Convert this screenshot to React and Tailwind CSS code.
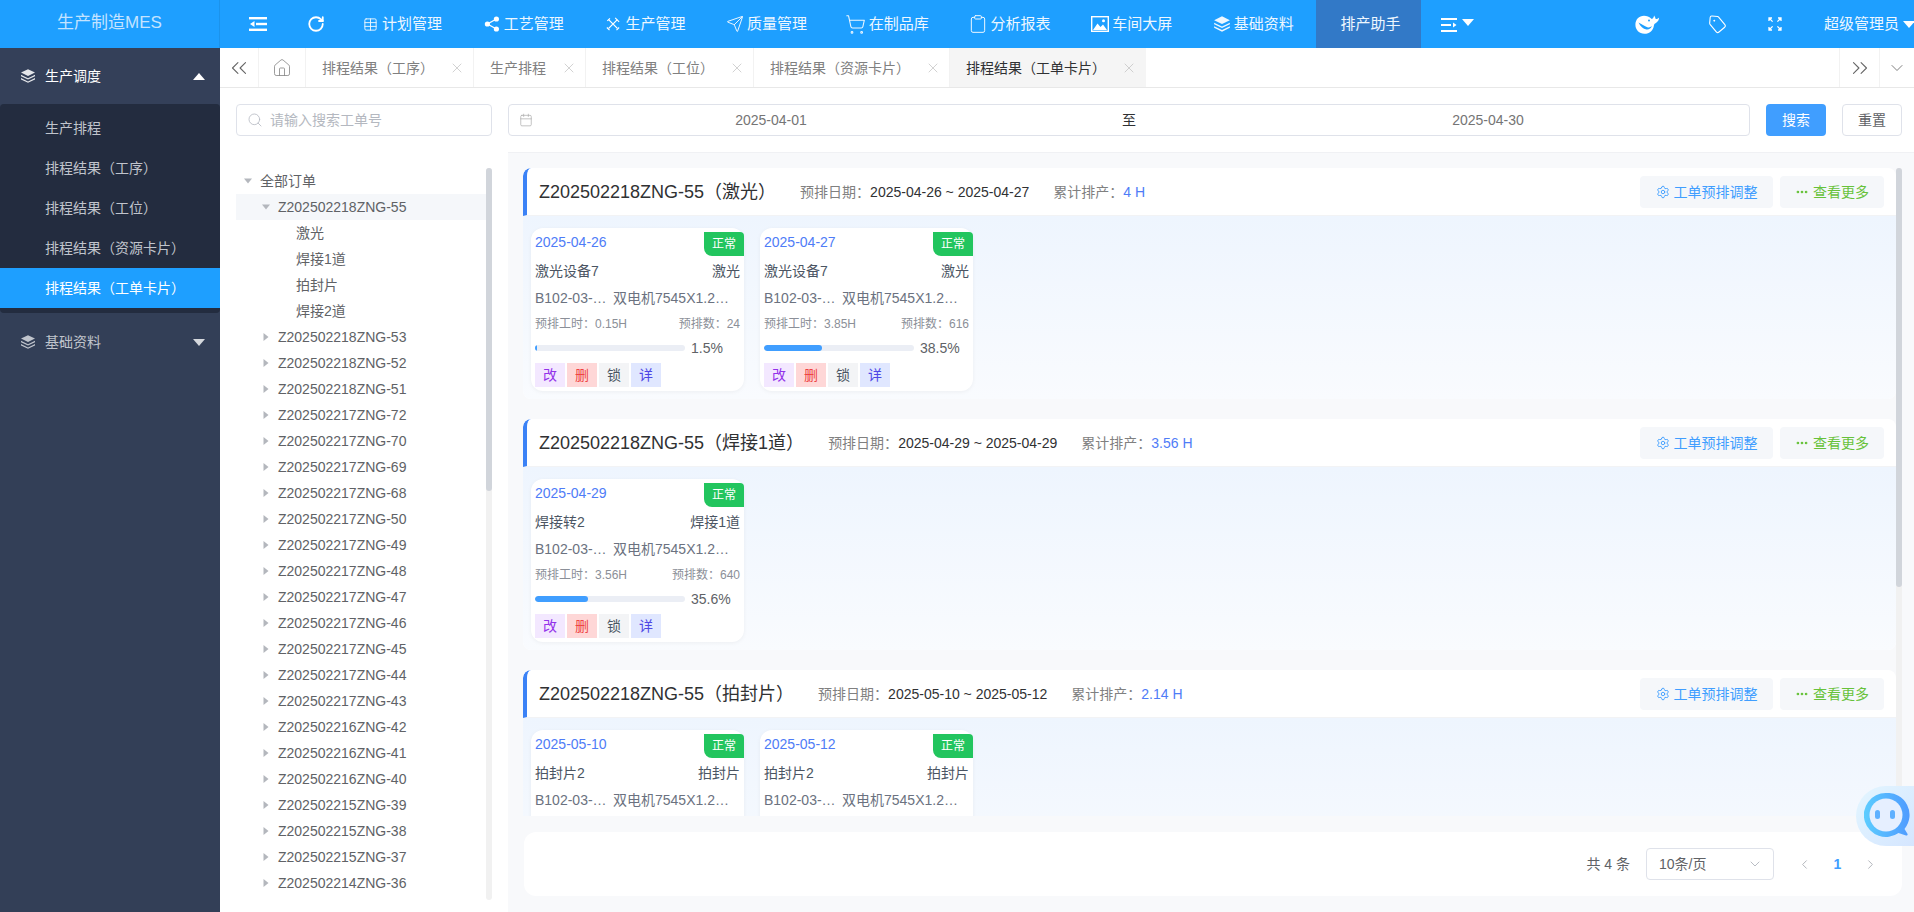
import React from 'react';
import {
    ChevronDown, ChevronLeft, ChevronRight, ChevronsLeft, ChevronsRight, Calendar, Clipboard, Ellipsis,
    House, RotateCw, Search, Send, Settings, ShoppingCart, Table, Tag, X
} from 'lucide-react';

const StackIcon = ({ className }) => (
    <svg viewBox="0 0 16 16" className={className} fill="currentColor">
        <path d="M8 1.200 15 4.600 8 8 1 4.600z" />
        <path d="M1 6.800 8 10.200 15 6.800V8.200L8 11.600 1 8.200z" />
        <path d="M1 10 8 13.400 15 10V11.400L8 14.800 1 11.400z" />
    </svg>
);

const FoldIcon = () => (
    <svg viewBox="0 0 18 16" className="w-[18px] h-4" fill="white">
        <rect x="0" y="1" width="18" height="2.4" />
        <rect x="7" y="6.8" width="11" height="2.4" />
        <rect x="0" y="12.6" width="18" height="2.4" />
        <path d="M5.500 5 1 8 5.500 11z" />
    </svg>
);

const MoreIcon = () => (
    <svg viewBox="0 0 16 16" className="w-4 h-4" fill="white">
        <rect x="0" y="1" width="16" height="2" />
        <rect x="0" y="7" width="10" height="2" />
        <rect x="0" y="13" width="16" height="2" />
        <path d="M12 5.500 15.500 8 12 10.500z" />
    </svg>
);

const ShareIcon = () => (
    <svg viewBox="0 0 16 16" className="w-4 h-4" fill="white">
        <circle cx="3.4" cy="8" r="2.6" />
        <circle cx="12.4" cy="3" r="2.6" />
        <circle cx="12.4" cy="13" r="2.6" />
        <path d="M3.400 8 12.400 3M3.400 8l9 5" stroke="white" strokeWidth="1.4" />
    </svg>
);

// crossed tools next to 生产管理
const ToolsIcon = () => (
    <svg viewBox="0 0 16 16" className="w-[14px] h-[14px] shrink-0" fill="none" stroke="white" strokeWidth="1.5">
        <path d="M3 13 13 3M3 3l10 10" />
        <path d="M1.500 4.500 4.500 1.500M10.500 1 15 5.500M1 12l3 3M12 15l3-3" strokeWidth="1.300" />
    </svg>
);

// picture frame with a solid mountain, 车间大屏
const PictureIcon = () => (
    <svg viewBox="0 0 18 16" className="w-[18px] h-4 shrink-0">
        <rect x="0.7" y="0.7" width="16.600" height="14.600" fill="none" stroke="white" strokeWidth="1.400" />
        <path d="M2 14 6.500 7.500 9.500 11 12 8.500 16 14z" fill="white" />
        <circle cx="12.500" cy="4.800" r="1.500" fill="white" />
    </svg>
);

const FullIcon = () => (
    <svg viewBox="0 0 14 14" className="w-[14px] h-[14px]" fill="none" stroke="white" strokeWidth="1.3">
        <path d="M1 4V1h3M1 1l3.600 3.600M13 4V1h-3M13 1 9.400 4.600M1 10v3h3M1 13l3.600-3.600M13 10v3h-3M13 13 9.400 9.400" />
    </svg>
);

const WhaleIcon = () => (
    <svg viewBox="0 0 25 19" className="w-[25px] h-[19px]">
        <path d="M9 .8C4 .8.4 4.600.4 9.800c0 5.200 3.900 8.900 9 8.900 5.300 0 9-3.500 9.500-8.300.2-1.400 1.200-2.100 2.600-3 1.500-1 2.600-2.700 2.600-4.900-1 1-2.200 1.600-3.400 1.600-.2-1.200-.8-2.500-1.600-3.600-.3 1.800-1.100 3-2.300 3.400C14.300 1.900 11.800.8 9 .8z" fill="white" />
        <path d="M3.500 7.500c2 4 4.500 6.600 8 7 2.600.3 4.500-1 5.400-3.500-1.300 1.200-2.900 1.700-4.500 1.200C9.500 11.300 6.500 8.800 3.500 7.500z" fill="#1e9fff" />
        <circle cx="14" cy="5.500" r="1" fill="#1e9fff" />
    </svg>
);

const Caret = ({ up, className }) => (
    <svg viewBox="0 0 12 7" className={className} fill="currentColor">
        <path d={up ? 'M6 0 12 7H0z' : 'M0 0H12L6 7z'} />
    </svg>
);

const TreeArrow = ({ open }) => (
    <svg viewBox="0 0 8 8" className="w-2 h-2 text-[#b4b7bd]" fill="currentColor">
        <path d={open ? 'M0 1.500H8L4 6.500z' : 'M1.500 0 6.500 4 1.500 8z'} />
    </svg>
);

const ChatBubble = () => (
    <div className="absolute right-0 top-[786px] w-[58px] h-[60px] rounded-l-[30px] bg-gradient-to-br from-[#e3f6ff] to-[#d5e6ff] flex items-center pl-2">
        <svg viewBox="0 0 46 46" className="w-[46px] h-[46px]">
            <defs>
                <linearGradient id="ring" x1="0" y1="0.5" x2="1" y2="0.5">
                    <stop offset="0" stopColor="#5ccdff" />
                    <stop offset="1" stopColor="#4f9bff" />
                </linearGradient>
            </defs>
            <path d="M22 0a22 22 0 1 0 12.500 40l7.500 2.500c1.500.3 2-1 1.300-2l-2.800-4.500A22 22 0 0 0 22 0z" fill="url(#ring)" />
            <circle cx="22" cy="22" r="16.500" fill="#e6efff" />
            <rect x="11" y="17" width="5" height="9" rx="2.500" fill="#5fb0ff" />
            <rect x="26" y="17" width="5" height="9" rx="2.500" fill="#5fb0ff" />
        </svg>
    </div>
);

const navItems = [
    { label: '计划管理', icon: <Table size={15} strokeWidth={1.5} className="shrink-0" /> },
    { label: '工艺管理', icon: <ShareIcon /> },
    { label: '生产管理', icon: <ToolsIcon /> },
    { label: '质量管理', icon: <Send size={18} strokeWidth={1.3} className="shrink-0" /> },
    { label: '在制品库', icon: <ShoppingCart size={21} strokeWidth={1.2} className="shrink-0 -ml-[3px]" /> },
    { label: '分析报表', icon: <Clipboard size={20} strokeWidth={1.2} className="shrink-0" /> },
    { label: '车间大屏', icon: <PictureIcon /> },
    { label: '基础资料', icon: <StackIcon className="w-[18px] h-[18px] shrink-0" /> },
];

const subMenu = ['生产排程', '排程结果（工序）', '排程结果（工位）', '排程结果（资源卡片）', '排程结果（工单卡片）'];

const tabs = [
    { label: '排程结果（工序）' },
    { label: '生产排程' },
    { label: '排程结果（工位）' },
    { label: '排程结果（资源卡片）' },
    { label: '排程结果（工单卡片）', active: true },
];

const treeOrders = [
    '218ZNG-53', '218ZNG-52', '218ZNG-51', '217ZNG-72', '217ZNG-70', '217ZNG-69', '217ZNG-68', '217ZNG-50',
    '217ZNG-49', '217ZNG-48', '217ZNG-47', '217ZNG-46', '217ZNG-45', '217ZNG-44', '217ZNG-43', '216ZNG-42',
    '216ZNG-41', '216ZNG-40', '215ZNG-39', '215ZNG-38', '215ZNG-37', '214ZNG-36',
];

const sections = [
    {
        title: 'Z202502218ZNG-55（激光）',
        range: '2025-04-26 ~ 2025-04-27',
        total: '4 H',
        cards: [
            { date: '2025-04-26', device: '激光设备7', step: '激光', hours: '0.15H', count: '24', pct: 1.5 },
            { date: '2025-04-27', device: '激光设备7', step: '激光', hours: '3.85H', count: '616', pct: 38.5 },
        ],
    },
    {
        title: 'Z202502218ZNG-55（焊接1道）',
        range: '2025-04-29 ~ 2025-04-29',
        total: '3.56 H',
        cards: [
            { date: '2025-04-29', device: '焊接转2', step: '焊接1道', hours: '3.56H', count: '640', pct: 35.6 },
        ],
    },
    {
        title: 'Z202502218ZNG-55（拍封片）',
        range: '2025-05-10 ~ 2025-05-12',
        total: '2.14 H',
        cards: [
            { date: '2025-05-10', device: '拍封片2', step: '拍封片', hours: '2.14H', count: '340', pct: 21.4 },
            { date: '2025-05-12', device: '拍封片2', step: '拍封片', hours: '1.00H', count: '160', pct: 10 },
        ],
    },
];

const actions = [
    { label: '改', className: 'bg-[#f3e8ff] text-[#9333ea]' },
    { label: '删', className: 'bg-[#fed7d7] text-[#ef4444]' },
    { label: '锁', className: 'bg-[#f3f4f6] text-[#4b5563]' },
    { label: '详', className: 'bg-[#e0e7ff] text-[#4f46e5]' },
];

function TopBar() {
    return (
        <header className="h-12 shrink-0 flex items-center bg-[#1e9fff] text-white overflow-hidden">
            <div className="w-[220px] h-full shrink-0 flex items-center justify-center border-r border-[#1b93ec] text-[17px] text-[#c4e3ff] pb-[3px]">
                生产制造MES
            </div>
            <div className="w-[122px] shrink-0 flex items-center pl-[29px]">
                <FoldIcon />
                <RotateCw size={18} strokeWidth={2.4} className="ml-[40px]" />
            </div>
            {navItems.map((item) => (
                <div key={item.label} className="w-[121.7px] shrink-0 flex items-center pl-5 text-[15px] text-[#eef7ff]">
                    <span className="w-4 h-4 flex items-center justify-center">{item.icon}</span>
                    <span className="ml-1">{item.label}</span>
                </div>
            ))}
            <div className="w-[105px] h-full shrink-0 flex items-center pl-[25px] bg-[#3279c7] text-[15px] text-[#eef7ff]">
                排产助手
            </div>
            <div className="flex items-center ml-5 mt-px">
                <MoreIcon />
                <Caret className="w-3 h-[7px] ml-[5px] -mt-[5px]" />
            </div>
            <div className="ml-auto flex items-center -mr-px">
                <WhaleIcon />
                <Tag size={19} strokeWidth={1.4} className="ml-[48px] rotate-[5deg]" />
                <span className="ml-[41px]"><FullIcon /></span>
                <span className="ml-[42px] text-[15px] text-[#eef7ff]">超级管理员</span>
                <Caret className="w-3 h-[7px] ml-1" />
            </div>
        </header>
    );
}

function SideMenu() {
    return (
        <aside className="w-[220px] shrink-0 bg-[#333f57] text-sm">
            <div className="h-14 flex items-center pl-5 pr-[15px] bg-[#344059] text-white">
                <StackIcon className="w-4 h-4 text-[#e4e6ea]" />
                <span className="ml-[9px] flex-1">生产调度</span>
                <Caret up className="w-3 h-[7px]" />
            </div>
            <div className="py-1 bg-[#232c3f] rounded-sm h-[209px]">
                {subMenu.map((label, i) => (
                    <div
                        key={label}
                        className={i === 4
                            ? 'h-10 flex items-center pl-[45px] bg-[#1e9fff] text-white'
                            : 'h-10 flex items-center pl-[45px] text-[#c0c4cc]'}
                    >
                        {label}
                    </div>
                ))}
            </div>
            <div className="h-14 mt-px flex items-center pl-5 pr-[15px] text-[#c0c4cc]">
                <StackIcon className="w-4 h-4" />
                <span className="ml-[9px] flex-1">基础资料</span>
                <Caret className="w-3 h-[7px] text-[#d5d8dd]" />
            </div>
        </aside>
    );
}

function TabBar() {
    return (
        <div className="h-10 shrink-0 flex border-b border-[#e8e8e8] bg-white">
            <div className="w-[39px] flex items-center justify-center border-r border-[#f2f2f2] text-[#666]">
                <ChevronsLeft size={26} strokeWidth={1} />
            </div>
            <div className="w-[47px] flex items-center justify-center border-r border-[#f2f2f2] text-[#888]">
                <House size={20} strokeWidth={1} />
            </div>
            {tabs.map((tab) => (
                <div
                    key={tab.label}
                    className={tab.active
                        ? 'flex items-center pl-4 pr-[9px] bg-[#f5f5f5] text-sm text-[#303133]'
                        : 'flex items-center pl-4 pr-2 border-r border-[#f2f2f2] text-sm text-[#808080]'}
                >
                    <span>{tab.label}</span>
                    <X size={16} strokeWidth={1} className="ml-[15px] text-[#bbb]" />
                </div>
            ))}
            <div className="ml-auto w-10 flex items-center justify-center border-l border-[#f2f2f2] text-[#666]">
                <ChevronsRight size={26} strokeWidth={1} />
            </div>
            <div className="w-[35px] flex items-center justify-center border-l border-[#f2f2f2] text-[#666]">
                <ChevronDown size={20} strokeWidth={1} />
            </div>
        </div>
    );
}

function SearchRow() {
    return (
        <div className="h-16 shrink-0 flex items-center pl-4 pr-3 gap-4 text-sm">
            <div className="w-[256px] h-8 flex items-center px-[10px] border border-[#dfe2ea] rounded text-[#b4b8c0]">
                <Search size={16} strokeWidth={1.2} />
                <span className="ml-[7px]">请输入搜索工单号</span>
            </div>
            <div className="flex-1 h-8 flex items-center pl-[10px] pr-[22px] border border-[#dfe2ea] rounded text-[#757575]">
                <Calendar size={14} strokeWidth={1.2} className="text-[#aaa]" />
                <span className="w-[476px] text-center">2025-04-01</span>
                <span className="flex-1 text-center text-[#303133]">至</span>
                <span className="w-[478px] text-center">2025-04-30</span>
            </div>
            <div className="w-[60px] h-8 flex items-center justify-center rounded bg-[#409eff] text-white">搜索</div>
            <div className="w-[60px] h-8 flex items-center justify-center rounded border border-[#dfe2ea] text-[#606266]">重置</div>
        </div>
    );
}

function TreePanel() {
    return (
        <div className="w-[288px] shrink-0 flex pl-4 pr-4 pt-4 h-full text-sm text-[#606266]">
            <div className="flex-1 overflow-hidden">
                <div className="h-[26px] flex items-center pl-2 gap-2">
                    <TreeArrow open />
                    <span>全部订单</span>
                </div>
                <div className="h-[26px] flex items-center pl-[26px] gap-2 bg-[#f5f7fa]">
                    <TreeArrow open />
                    <span>Z202502218ZNG-55</span>
                </div>
                {['激光', '焊接1道', '拍封片', '焊接2道'].map((leaf) => (
                    <div key={leaf} className="h-[26px] flex items-center pl-[60px]">{leaf}</div>
                ))}
                {treeOrders.map((code) => (
                    <div key={code} className="h-[26px] flex items-center pl-[26px] gap-2">
                        <TreeArrow />
                        <span>Z202502{code}</span>
                    </div>
                ))}
            </div>
            <div className="w-[6px] h-[732px] rounded bg-[#f1f1f1]">
                <div className="h-[323px] rounded bg-[#d1d5db]" />
            </div>
        </div>
    );
}

function WorkCard({ card }) {
    return (
        <div className="relative w-[213px] h-[163px] shrink-0 px-1 rounded-xl bg-white shadow-[0_1px_4px_rgba(0,0,0,0.05)]">
            <div className="h-7 flex items-center text-sm text-[#4f7cf7]">{card.date}</div>
            <span className="absolute right-0 top-1 w-10 h-6 flex items-center justify-center rounded-bl-lg rounded-tr-sm bg-[#22c55e] text-xs text-white">正常</span>
            <div className="h-[30px] flex items-center justify-between text-sm text-[#4b5563]">
                <span>{card.device}</span>
                <span>{card.step}</span>
            </div>
            <div className="h-6 flex items-center text-sm text-[#6b7280]">
                <span className="w-[72px] truncate">B102-03-01234</span>
                <span className="ml-[6px] w-[116px] truncate">双电机7545X1.2X3800</span>
            </div>
            <div className="h-7 flex items-center justify-between text-xs text-[#8b8f98]">
                <span>预排工时：{card.hours}</span>
                <span>预排数：{card.count}</span>
            </div>
            <div className="h-5 flex items-center">
                <div className="w-[150px] h-[6px] rounded-full bg-[#ebeef5] overflow-hidden">
                    <div className="h-full rounded-full bg-[#409eff]" style={{ width: `${card.pct}%` }} />
                </div>
                <span className="ml-[6px] text-sm text-[#606266]">{card.pct}%</span>
            </div>
            <div className="mt-[5px] flex gap-[2px]">
                {actions.map((a) => (
                    <span key={a.label} className={`w-[30px] h-6 flex items-center justify-center text-sm ${a.className}`}>{a.label}</span>
                ))}
            </div>
        </div>
    );
}

function OrderSection({ section }) {
    return (
        <section className="shrink-0 rounded-lg bg-white overflow-hidden">
            <div className="h-12 flex items-center pl-3 pr-3 border-l-4 border-b border-l-[#3b82f6] border-b-[#f2f3f5] rounded-tl-lg text-sm">
                <h2 className="text-lg text-[#303133]">{section.title}</h2>
                <div className="ml-6 text-[#808080]">
                    预排日期：<span className="text-[#303133]">{section.range}</span>
                </div>
                <div className="ml-6 text-[#808080]">
                    累计排产：<span className="text-[#4f7cf7]">{section.total}</span>
                </div>
                <div className="ml-auto w-[133px] h-8 flex items-center justify-center gap-1 rounded bg-[#f5f7fa] text-[#409eff]">
                    <Settings size={14} strokeWidth={1.6} />
                    <span>工单预排调整</span>
                </div>
                <div className="ml-[7px] w-[104px] h-8 flex items-center justify-center gap-1 rounded bg-[#f5f7fa] text-[#67c23a]">
                    <Ellipsis size={14} strokeWidth={2.6} />
                    <span>查看更多</span>
                </div>
            </div>
            <div className="flex gap-4 px-2 pt-3 pb-2 bg-gradient-to-b from-[#eef5fe] to-[#f9fbfe]">
                {section.cards.map((card) => (
                    <WorkCard key={card.date} card={card} />
                ))}
            </div>
        </section>
    );
}

function ResultPanel() {
    return (
        <div className="flex-1 flex flex-col min-w-0 pl-4 pr-3 pt-4 bg-[#f8f9fb] border-t border-[#f0f1f4]">
            <div className="h-[648px] flex -mt-px -ml-px">
                <div className="flex-1 min-w-0 flex flex-col gap-5 overflow-hidden">
                    {sections.map((section) => (
                        <OrderSection key={section.title} section={section} />
                    ))}
                </div>
                <div className="w-[6px] h-full bg-[#f1f1f1] rounded">
                    <div className="h-[419px] rounded bg-[#d1d5db]" />
                </div>
            </div>
            <div className="mt-4 h-16 shrink-0 flex items-center justify-end pr-6 rounded-xl bg-white text-sm text-[#606266]">
                <span>共 4 条</span>
                <div className="ml-4 w-[128px] h-8 flex items-center justify-between pl-3 pr-[10px] border border-[#dfe2ea] rounded">
                    <span>10条/页</span>
                    <ChevronDown size={16} strokeWidth={1.4} className="text-[#b4b8c0]" />
                </div>
                <ChevronLeft size={15} strokeWidth={1.4} className="ml-[23px] text-[#a8abb2]" />
                <span className="mx-[21px] w-[9px] text-center font-bold text-[#409eff]">1</span>
                <ChevronRight size={15} strokeWidth={1.4} className="text-[#a8abb2]" />
            </div>
        </div>
    );
}

export default function App() {
    return (
        <div className="relative w-[1914px] h-[912px] flex flex-col overflow-hidden bg-white font-['Liberation_Sans','Noto_Sans_CJK_SC',sans-serif]">
            <TopBar />
            <div className="flex-1 flex min-h-0">
                <SideMenu />
                <main className="flex-1 flex flex-col min-w-0">
                    <TabBar />
                    <SearchRow />
                    <div className="flex-1 flex min-h-0">
                        <TreePanel />
                        <ResultPanel />
                    </div>
                </main>
            </div>
            <ChatBubble />
        </div>
    );
}
